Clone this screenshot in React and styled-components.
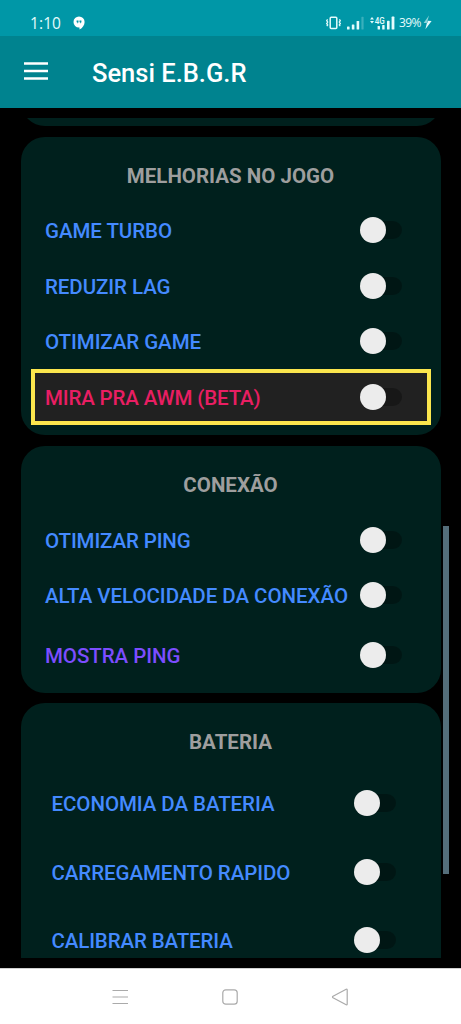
import React, { useState } from 'react';
import styled, { createGlobalStyle } from 'styled-components';

const GlobalStyle = createGlobalStyle`
  * {
    box-sizing: border-box;
  }

  body {
    margin: 0;
    background: #000;
    font-family: Roboto, sans-serif;
  }
`;

const Screen = styled.div`
  display: flex;
  flex-direction: column;
  width: 461px;
  height: 1024px;
  overflow: hidden;
  background: #000;
`;

const StatusBar = styled.div`
  flex: none;
  display: flex;
  align-items: center;
  height: 36px;
  padding: 9px 29px 0 30px;
  background: #0097a7;
  color: #e4fbfc;
`;

const Clock = styled.span`
  width: 43px;
  font-family: 'Open Sans', sans-serif;
  font-size: 15.5px;
  line-height: 20px;
  letter-spacing: 0.1px;
`;

const StatusIcons = styled.div`
  display: flex;
  align-items: center;
  margin-left: auto;
`;

const SignalGroup = styled.div`
  display: flex;
  gap: 6px;
  margin-left: 6px;
`;

const Battery = styled.span`
  width: 24px;
  margin-left: 4px;
  font-family: 'Open Sans', sans-serif;
  font-size: 12px;
  font-weight: 500;
  line-height: 18px;
  letter-spacing: -0.6px;
  white-space: nowrap;
`;

const Toolbar = styled.header`
  flex: none;
  display: flex;
  align-items: center;
  gap: 44px;
  height: 71.5px;
  padding: 0 24px;
  background: #00838f;
`;

const MenuButton = styled.button`
  display: flex;
  margin-bottom: 1px;
  padding: 0;
  border: none;
  background: none;
  color: #fff;
  cursor: pointer;
`;

const AppTitle = styled.h1`
  margin: 3px 0 0;
  color: #fff;
  font-size: 25.5px;
  font-weight: 500;
  line-height: 32px;
`;

const Content = styled.main`
  position: relative;
  flex: 1;
  min-height: 0;
  padding: 10.5px 20.5px 10px;
`;

const CardList = styled.div`
  display: flex;
  flex-direction: column;
  gap: 10.5px;
  height: 100%;
  overflow: hidden;
`;

const Card = styled.section`
  flex: none;
  padding: 0 ${props => props.inset || 10}px ${props => props.bottom || 0}px;
  border-radius: 24px;
  background: #00201d;
`;

const PreviousCard = styled(Card)`
  height: 60px;
  margin-top: -52px;
`;

const CardTitle = styled.h2`
  margin: 0;
  padding-top: 12px;
  height: 66px;
  color: #9e9e9e;
  font-size: 20.5px;
  font-weight: 700;
  line-height: 54px;
  text-align: center;
`;

const Row = styled.div`
  display: flex;
  align-items: center;
  justify-content: space-between;
  height: ${props => props.height || 55.6}px;
  padding: 0 28.5px 0 14.5px;
  background: ${props => (props.highlighted ? '#212121' : 'transparent')};
  box-shadow: ${props => (props.highlighted ? 'inset 0 0 0 4px #fbe64d' : 'none')};
`;

const Label = styled.span`
  padding-top: 2px;
  color: ${props => props.color || '#448aff'};
  font-size: 20.5px;
  font-weight: 500;
  line-height: 26px;
  letter-spacing: ${props => props.tracking || -0.06}px;
  white-space: nowrap;
`;

const Track = styled.button`
  flex: none;
  display: flex;
  align-items: center;
  width: 37px;
  height: 18px;
  padding: 0;
  border: none;
  border-radius: 9px;
  background: rgba(0, 0, 0, 0.3);
  cursor: pointer;
`;

const Thumb = styled.span`
  flex: none;
  width: 26px;
  height: 26px;
  margin-left: ${props => (props.on ? 15 : -5)}px;
  border-radius: 50%;
  background: #ececec;
`;

const ScrollThumb = styled.div`
  position: absolute;
  top: 418.5px;
  right: 12.5px;
  width: 5.5px;
  height: 348px;
  background: #546e7a;
`;

const NavBar = styled.nav`
  flex: none;
  display: flex;
  align-items: center;
  justify-content: space-between;
  height: 56px;
  padding: 0 112px 0 111px;
  border-top: 1px solid #d0d0d0;
  background: #fff;
  color: #aaa;
`;

const cards = [
  {
    title: 'MELHORIAS NO JOGO',
    bottom: 10.5,
    rows: [
      { label: 'GAME TURBO' },
      { label: 'REDUZIR LAG' },
      { label: 'OTIMIZAR GAME' },
      { label: 'MIRA PRA AWM (BETA)', color: '#e91e63', tracking: -0.14, highlighted: true },
    ],
  },
  {
    title: 'CONEXÃO',
    bottom: 6.6,
    rows: [
      { label: 'OTIMIZAR PING', tracking: -0.12 },
      { label: 'ALTA VELOCIDADE DA CONEXÃO', tracking: -0.03 },
      { label: 'MOSTRA PING', color: '#7c4dff', height: 63 },
    ],
  },
  {
    title: 'BATERIA',
    inset: 16.5,
    bottom: 24,
    rows: [
      { label: 'ECONOMIA DA BATERIA', height: 68.5 },
      { label: 'CARREGAMENTO RAPIDO', height: 68.5 },
      { label: 'CALIBRAR BATERIA', height: 68.5, tracking: -0.12 },
    ],
  },
];

const HangoutsIcon = () => (
  <svg width="12" height="14" viewBox="0 0 12 14">
    <path d="M6 0.5a5.5 5.5 0 0 0 0 11h.5V13.6C9.6 12 11.6 9 11.6 6A5.6 5.5 0 0 0 6 .5z" fill="#fff" />
    <path d="M3.6 4.4h1.9v1.8l-.8 1.1h-.6l.4-1.1h-.9zM6.5 4.4h1.9v1.8l-.8 1.1h-.6l.4-1.1h-.9z" fill="#0097a7" />
  </svg>
);

const VibrateIcon = () => (
  <svg width="15" height="14" viewBox="0 0 15 14" fill="none" stroke="currentColor">
    <rect x="4.2" y="1.2" width="6.6" height="11.4" rx="1" strokeWidth="1.5" />
    <path d="M1.6 3.4l-.9 1.3 1 1.4-1 1.4 1 1.4-.9 1.2M13.4 3.4l.9 1.3-1 1.4 1 1.4-1 1.4.9 1.2" strokeWidth="1.3" />
  </svg>
);

const SignalIcon = () => (
  <svg width="17" height="14" viewBox="0 0 17 14" fill="currentColor">
    <rect x="0" y="10.4" width="2.6" height="3.1" rx="0.6" />
    <rect x="4.8" y="8.4" width="2.6" height="5.1" rx="0.6" />
    <rect x="9.6" y="5" width="2.6" height="8.5" rx="0.6" />
    <rect x="14.4" y="0.8" width="2.2" height="12.7" rx="0.6" opacity="0.25" />
  </svg>
);

const MobileDataIcon = () => (
  <svg width="25" height="14" viewBox="0 0 25 14" fill="currentColor">
    <path d="M0 3.4L2 1l2 2.4zM0 5L2 7.4 4 5z" />
    <text x="4.8" y="8" fontFamily="Roboto" fontSize="9" fontWeight="500" textLength="10" lengthAdjust="spacingAndGlyphs">4G</text>
    <rect x="7.6" y="10" width="2.4" height="3.5" rx="0.6" />
    <rect x="12.2" y="9" width="2.4" height="4.5" rx="0.6" />
    <rect x="17" y="4.8" width="2.6" height="8.7" rx="0.6" />
    <rect x="21.6" y="0.6" width="2.8" height="12.9" rx="0.6" />
  </svg>
);

const BoltIcon = () => (
  <svg width="9" height="15" viewBox="0 0 9 15" fill="currentColor">
    <path d="M6 0.5L0.6 8h3.2z" opacity="0.6" />
    <path d="M4.8 5.8L4.3 8H0.6h3.3L2.4 14.2 8.6 6z" />
  </svg>
);

const Switch = () => {
  const [on, setOn] = useState(false);

  return (
    <Track role="switch" aria-checked={on} onClick={() => setOn(!on)}>
      <Thumb on={on ? 1 : 0} />
    </Track>
  );
};

const App = () => {
  return (
    <Screen>
      <GlobalStyle />

      <StatusBar>
        <Clock>1:10</Clock>
        <HangoutsIcon />
        <StatusIcons>
          <VibrateIcon />
          <SignalGroup>
            <SignalIcon />
            <MobileDataIcon />
          </SignalGroup>
          <Battery>39%</Battery>
          <BoltIcon />
        </StatusIcons>
      </StatusBar>

      <Toolbar>
        <MenuButton>
          <svg width="24" height="18" viewBox="0 0 24 18" fill="currentColor">
            <path d="M0 0.3h24v2.5H0zM0 7.8h24v2.5H0zM0 15.3h24v2.5H0z" />
          </svg>
        </MenuButton>
        <AppTitle>Sensi E.B.G.R</AppTitle>
      </Toolbar>

      <Content>
        <CardList>
          <PreviousCard />
          {cards.map((card) => (
            <Card key={card.title} inset={card.inset} bottom={card.bottom}>
              <CardTitle>{card.title}</CardTitle>
              {card.rows.map((row) => (
                <Row key={row.label} height={row.height} highlighted={row.highlighted ? 1 : 0}>
                  <Label color={row.color} tracking={row.tracking}>{row.label}</Label>
                  <Switch />
                </Row>
              ))}
            </Card>
          ))}
        </CardList>
        <ScrollThumb />
      </Content>

      <NavBar>
        <svg width="18" height="16" viewBox="0 0 18 16" stroke="currentColor" strokeWidth="1.2">
          <path d="M1.5 1.5h15.5M1.5 8h15.5M1.5 14.5h15.5" />
        </svg>
        <svg width="16" height="16" viewBox="0 0 16 16" fill="none" stroke="currentColor" strokeWidth="1.2">
          <rect x="0.8" y="0.8" width="14.4" height="14.4" rx="3" />
        </svg>
        <svg width="18" height="18" viewBox="0 0 18 18" fill="none" stroke="currentColor" strokeWidth="1.2" strokeLinejoin="round">
          <path d="M15.2 1.2L2 8.3q-1 .7 0 1.4L15.2 16.8q1 .3 1-.8V2q0-1.1-1-.8z" />
        </svg>
      </NavBar>
    </Screen>
  );
};

export default App;
